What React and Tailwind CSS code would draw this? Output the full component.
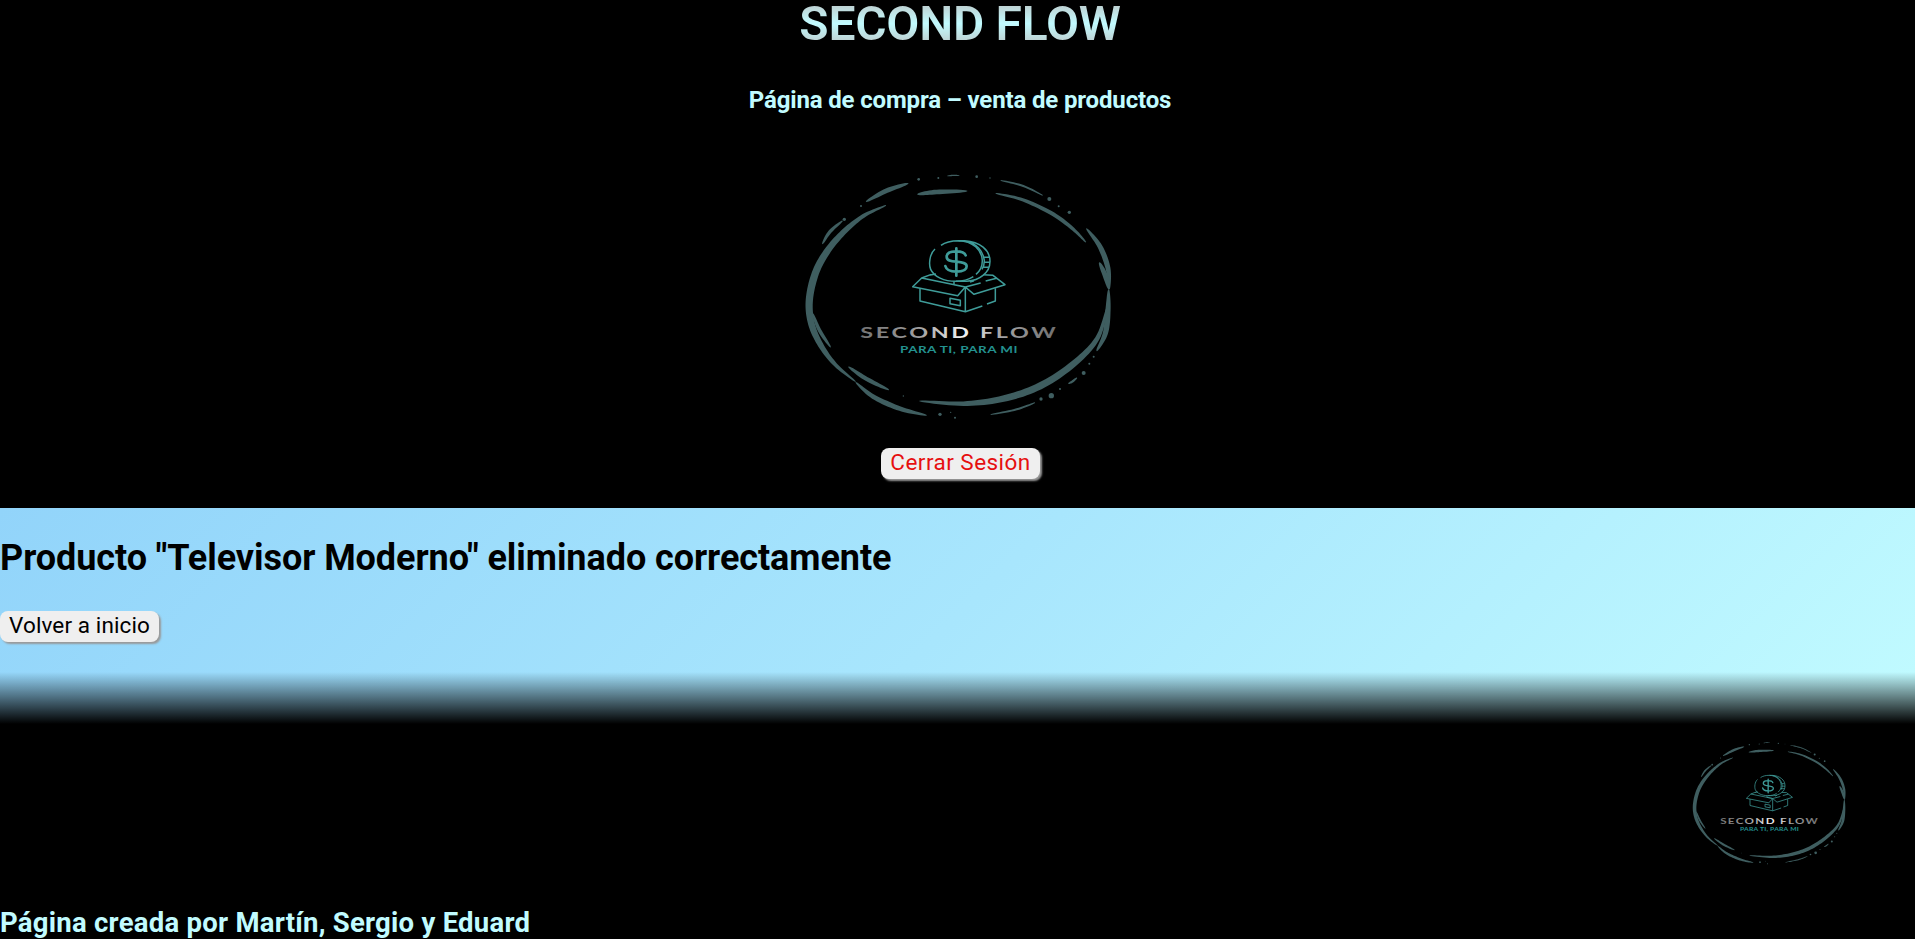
import { useId } from 'react';

// Builds a closed brush shape that tapers at both ends along a smooth curve.
function brush(points, width) {
  const p = [points[0], ...points, points[points.length - 1]];
  const samples = [];
  for (let i = 1; i < p.length - 2; i++) {
    for (let k = 0; k < 10; k++) {
      const t = k / 10;
      samples.push([0, 1].map((d) => {
        const a = p[i - 1][d], b = p[i][d], c = p[i + 1][d], e = p[i + 2][d];
        return 0.5 * (2 * b + (c - a) * t + (2 * a - 5 * b + 4 * c - e) * t * t + (3 * b - a - 3 * c + e) * t * t * t);
      }));
    }
  }
  samples.push(points[points.length - 1]);
  const n = samples.length - 1;
  const left = [], right = [];
  samples.forEach(([x, y], i) => {
    const a = samples[Math.max(0, i - 1)], b = samples[Math.min(n, i + 1)];
    const dx = b[0] - a[0], dy = b[1] - a[1], len = Math.hypot(dx, dy) || 1;
    const h = (width / 2) * Math.pow(Math.sin((Math.PI * i) / n), 0.7) + 1;
    left.push(`${(x - (dy / len) * h).toFixed(1)},${(y + (dx / len) * h).toFixed(1)}`);
    right.unshift(`${(x + (dy / len) * h).toFixed(1)},${(y - (dx / len) * h).toFixed(1)}`);
  });
  return `M${left.join('L')}L${right.join('L')}Z`;
}

const strokes = [
  [[[228, 125], [290, 92], [355, 70]], 12],
  [[[288, 136], [220, 168], [160, 217], [110, 276], [76, 340], [58, 420], [64, 490], [92, 555], [137, 615], [197, 665]], 20],
  [[[97, 252], [120, 215], [158, 182]], 8],
  [[[68, 460], [88, 510], [122, 562]], 9],
  [[[175, 620], [230, 657], [297, 690]], 11],
  [[[197, 667], [250, 710], [330, 746], [410, 766]], 13],
  [[[382, 103], [440, 96], [532, 93]], 12],
  [[[617, 100], [700, 120], [790, 163], [850, 208], [888, 247]], 10],
  [[[632, 61], [700, 78], [758, 106]], 4],
  [[[889, 205], [930, 260], [954, 325], [958, 388]], 14],
  [[[928, 307], [945, 345], [957, 388]], 13],
  [[[956, 388], [954, 450], [946, 520], [920, 573]], 15],
  [[[952, 440], [922, 535], [850, 612], [750, 678], [640, 716], [520, 731], [388, 723]], 19],
  [[[602, 764], [680, 748], [735, 728]], 4],
  [[[835, 671], [848, 664], [861, 653]], 5],
  [[[472, 48], [490, 46], [508, 47]], 2],
].map(([pts, w]) => brush(pts, w));

const dots = [
  [386, 58, 4], [445, 54, 3], [560, 50, 4], [600, 54, 2], [778, 117, 6], [806, 139, 3], [838, 157, 5],
  [163, 178, 5], [213, 138, 3], [881, 639, 6], [898, 611, 3], [911, 590, 3], [810, 687, 3], [784, 707, 8],
  [753, 717, 5], [450, 763, 5], [495, 773, 3], [340, 708, 2], [482, 757, 2],
];

function Logo({ className }) {
  const id = useId();
  return (
    <svg viewBox="0 0 1020 810" className={className} aria-label="Second Flow">
      <defs>
        <linearGradient id={id}>
          <stop offset="0" stopColor="#737373" />
          <stop offset="0.3" stopColor="#a0a0a0" />
          <stop offset="0.52" stopColor="#f4f4f4" />
          <stop offset="0.7" stopColor="#a6a6a6" />
          <stop offset="1" stopColor="#6e6e6e" />
        </linearGradient>
      </defs>
      <g fill="#3f5e60">
        {strokes.map((d, i) => <path key={i} d={d} />)}
        {dots.map(([x, y, r], i) => <circle key={i} cx={x} cy={y} r={r} />)}
      </g>
      <g fill="none" stroke="#3f9c99" strokeWidth="4.5" strokeLinejoin="round">
        <path d="M435 267C418 282 416 314 422 328C432 350 462 364 498 364C520 364 536 359 550 350M453 256C466 246 484 242 506 242C548 243 576 270 577 302C577 320 571 332 558 343" />
        <path d="M506 242H524C570 245 600 270 600 304C600 323 594 335 579 346C567 356 551 362 530 364H498M524 243C560 249 580 274 583 302C583 312 581 320 576 328M579 292H598M581 307H600M577 322H597" />
        <path d="M424 343L395 354L368 380L503 407L526 381L395 354M438 342L420 345M492 364V374L526 381L552 403L645 374L609 346L579 344M526 381L572 369M587 363L620 355M540 366L552 362" />
        <path d="M390 385V423L526 455L577 438M591 432L616 423V385M526 383V455" />
        <path d="M480 415L511 421V437L480 431Z" />
        <path strokeWidth="8" strokeLinecap="round" d="M499 265V347M527 286C524 277 513 274 498 274C481 274 470 280 470 290C470 302 482 304 499 305C518 307 530 309 530 319C530 330 517 335 499 335C481 335 469 330 466 318" />
      </g>
      <text x="211" y="535" textLength="594" lengthAdjust="spacingAndGlyphs" fill={`url(#${id})`} className="font-['Lato'] text-[44px] font-bold tracking-[5px]">SECOND FLOW</text>
      <text x="330" y="578" textLength="354" lengthAdjust="spacingAndGlyphs" fill="#23918f" className="font-['Lato'] text-[29px] font-bold tracking-[1px]">PARA TI, PARA MI</text>
    </svg>
  );
}

function Button({ className, children }) {
  return (
    <button className={`flex h-[31px] w-[159px] justify-center rounded-[8px] bg-[#efefef] text-[22.5px] leading-[28px] whitespace-nowrap shadow-[2px_2px_2px_#999] ${className}`}>
      {children}
    </button>
  );
}

export default function App() {
  return (
    <div className="flex h-[939px] w-full flex-col overflow-hidden bg-black font-['Roboto',sans-serif]">
      <header className="flex h-[508px] shrink-0 flex-col items-center bg-black">
        <h1 className="mt-[-5px] mr-[-5px] h-[57px] bg-linear-to-b from-[#bababa] via-[#c1fbff] to-[#bababa] bg-clip-text text-[48px] leading-[57px] font-semibold tracking-[-0.25px] whitespace-nowrap text-transparent">SECOND FLOW</h1>
        <h2 className="mt-[33px] mr-[-5px] h-[30px] text-[24px] leading-[30px] font-bold tracking-[-0.15px] whitespace-nowrap text-[#c1fbff]">Página de compra – venta de productos</h2>
        <Logo className="mt-[45px] mr-[-5px] h-[270px] w-[340px] shrink-0" />
        <Button className="mt-[18px] mr-[-6px] tracking-[0.45px] text-[#e60f0f]">Cerrar Sesión</Button>
      </header>
      <main className="h-[216px] shrink-0 bg-[linear-gradient(135deg,#92d4fa,#a8e6fd_50%,#c1fbff)]">
        <div className="flex h-[164px] flex-col items-start pt-[28px]">
          <h2 className="h-[44px] text-[36px] leading-[44px] font-bold tracking-[-0.06px] whitespace-nowrap text-black">Producto "Televisor Moderno" eliminado correctamente</h2>
          <Button className="mt-[31px] tracking-[0.1px] text-black">Volver a inicio</Button>
        </div>
        <div className="h-[52px] bg-linear-to-b from-transparent to-black" />
      </main>
      <footer className="flex h-[215px] shrink-0 flex-col bg-black">
        <Logo className="mt-[11px] mr-[60px] h-[135px] w-[170px] shrink-0 self-end" />
        <h3 className="mt-[37px] text-[27.5px] leading-[32px] font-bold tracking-[0.25px] whitespace-nowrap text-[#c1fbff]">Página creada por Martín, Sergio y Eduard</h3>
      </footer>
    </div>
  );
}
